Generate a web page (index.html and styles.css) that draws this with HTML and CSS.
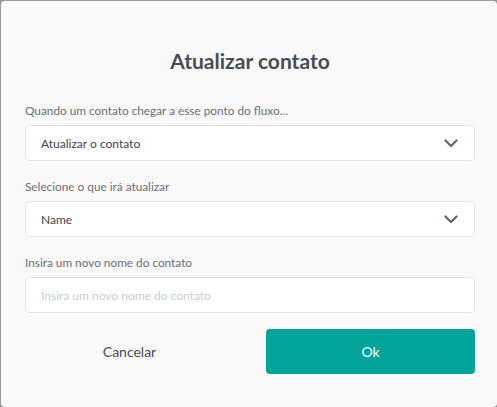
FILE: index.html
```html
<!DOCTYPE html>
<html lang="pt">
<head>
<meta charset="utf-8">
<link rel="stylesheet" href="styles.css">
</head>
<body>
<div class="modal">
  <h1 class="title">Atualizar contato</h1>
  <div class="field">
    <label class="label">Quando um contato chegar a esse ponto do fluxo...</label>
    <div class="select">
      <span>Atualizar o contato</span>
      <svg class="chev" width="14" height="9" viewBox="0 0 14 9"><path d="M1.5 1.5 L7 7 L12.5 1.5" fill="none" stroke="#5f6577" stroke-width="2.2" stroke-linecap="round" stroke-linejoin="round"/></svg>
    </div>
  </div>
  <div class="field">
    <label class="label">Selecione o que irá atualizar</label>
    <div class="select">
      <span>Name</span>
      <svg class="chev" width="14" height="9" viewBox="0 0 14 9"><path d="M1.5 1.5 L7 7 L12.5 1.5" fill="none" stroke="#5f6577" stroke-width="2.2" stroke-linecap="round" stroke-linejoin="round"/></svg>
    </div>
  </div>
  <div class="field">
    <label class="label">Insira um novo nome do contato</label>
    <input class="input" type="text" placeholder="Insira um novo nome do contato">
  </div>
  <div class="actions">
    <button class="btn btn-cancel">Cancelar</button>
    <button class="btn btn-ok">Ok</button>
  </div>
</div>
</body>
</html>
```
FILE: styles.css
```css
html, body {
  margin: 0;
  padding: 0;
}
body {
  background: #9a9a9a;
  width: 497px;
  height: 407px;
  overflow: hidden;
  font-family: Lato, "Noto Sans", sans-serif;
}
.modal {
  box-sizing: border-box;
  margin: 1px 0 0 1px;
  width: 496px;
  height: 406px;
  background: #f9f9f9;
  border-radius: 4px;
  padding: 47px 22px 0 24px;
}
.title {
  margin: 0 0 29px;
  text-align: center;
  font-size: 21px;
  font-weight: 700;
  line-height: 26px;
  color: #474c55;
}
.field {
  display: flex;
  flex-direction: column;
}
.field + .field {
  margin-top: 18px;
}
.label {
  font-size: 11.8px;
  line-height: 16px;
  color: #6b6e78;
  margin-bottom: 6px;
}
.select, .input {
  box-sizing: border-box;
  height: 36px;
  background: #fff;
  border: 1px solid #e3e6ec;
  border-radius: 4px;
  font-family: Lato, "Noto Sans", sans-serif;
  font-size: 12px;
}
.select {
  display: flex;
  align-items: center;
  justify-content: space-between;
  padding: 0 16px 0 15px;
  color: #3f434c;
}
.input {
  width: 100%;
  padding: 0 15px;
  outline: none;
}
.input::placeholder {
  color: #c9ccd3;
}
.actions {
  display: flex;
  gap: 32px;
  margin-top: 16px;
}
.btn {
  flex: 1;
  height: 45px;
  border: none;
  border-radius: 4px;
  font-family: Lato, "Noto Sans", sans-serif;
  font-size: 14px;
  cursor: pointer;
}
.btn-cancel {
  background: transparent;
  color: #454a54;
}
.btn-ok {
  background: #00a49b;
  color: #fff;
}
```
